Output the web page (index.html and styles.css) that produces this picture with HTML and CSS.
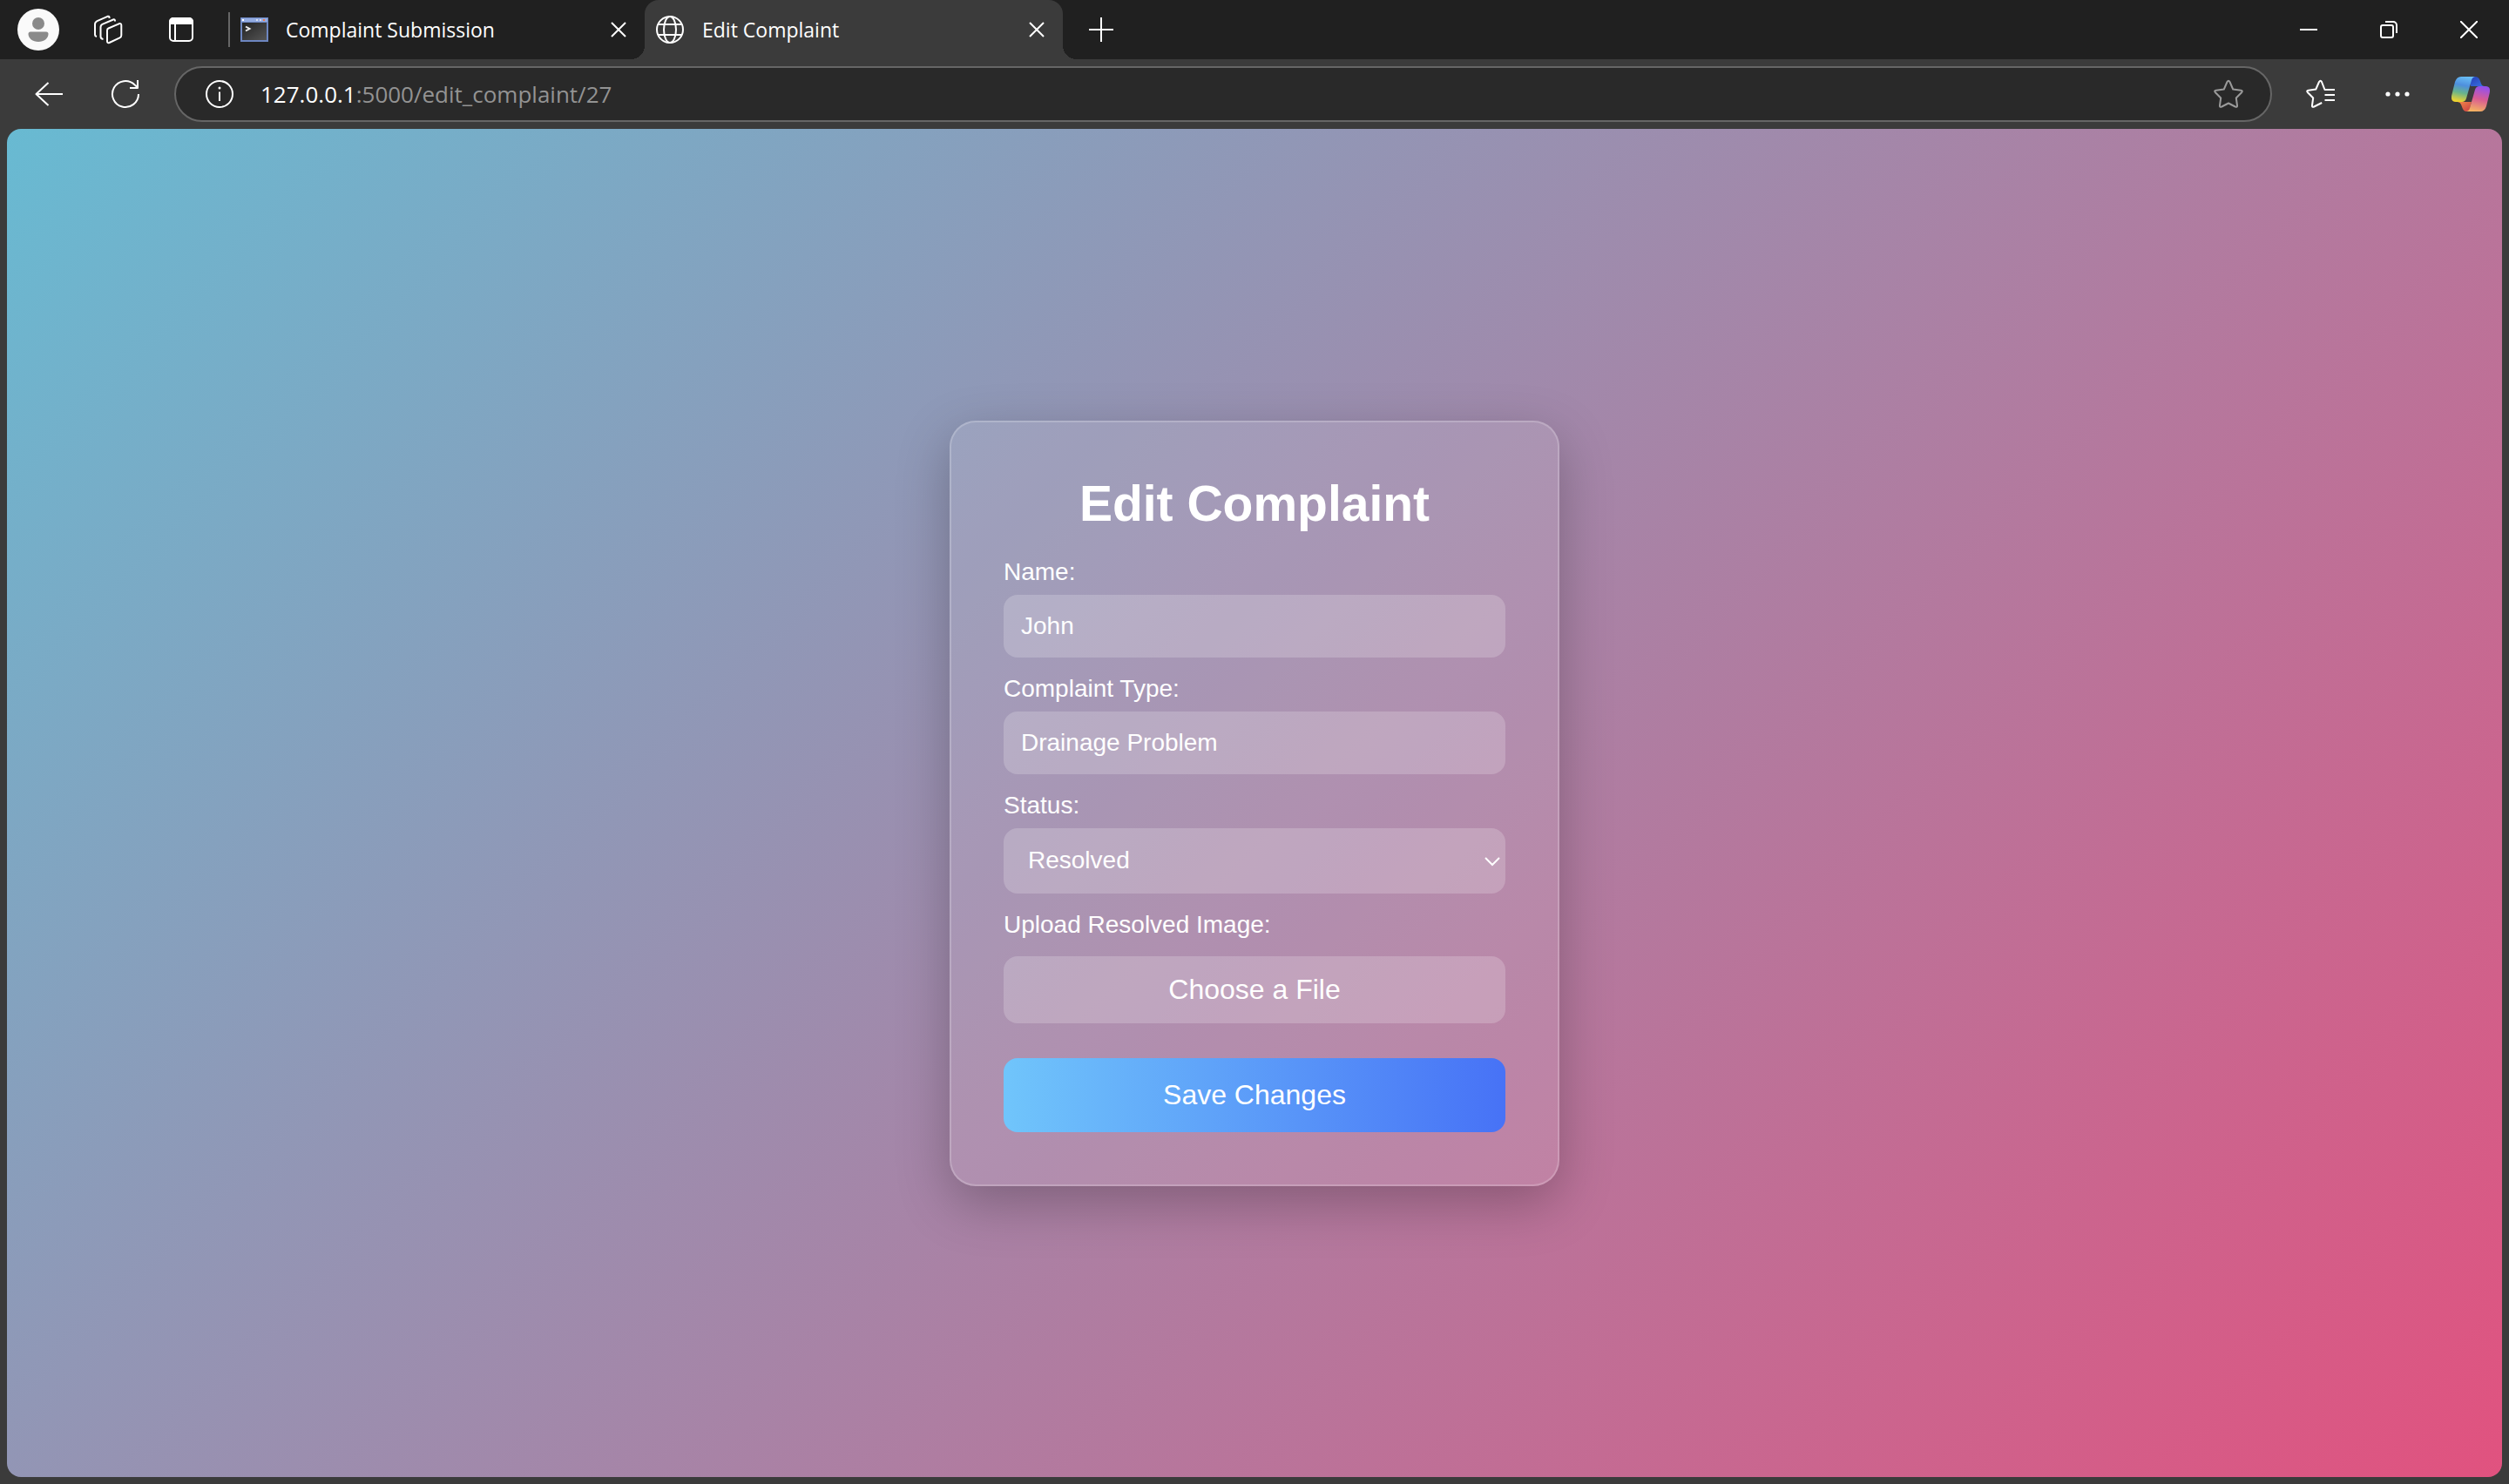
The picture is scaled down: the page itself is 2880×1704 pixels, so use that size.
FILE: index.html
```html
<!DOCTYPE html>
<html lang="en">
<head>
<meta charset="utf-8">
<meta name="viewport" content="width=device-width, initial-scale=1">
<title>Edit Complaint</title>
<link rel="stylesheet" href="styles.css">
</head>
<body>
<header class="browser">
  <div class="tabstrip">
    <button class="icon-btn profile" type="button" aria-label="Profile">
      <svg width="48" height="48" viewBox="0 0 48 48"><circle cx="24" cy="24" r="24" fill="#fafafa"/><circle cx="24" cy="17" r="7" fill="#8a8a8a"/><path d="M15 26.500h18a2.500 2.500 0 0 1 2.500 2.500c0 5-5 9-11.500 9s-11.500-4-11.500-9a2.500 2.500 0 0 1 2.500-2.500z" fill="#8a8a8a"/></svg>
    </button>
    <button class="icon-btn workspaces" type="button" aria-label="Workspaces">
      <svg class="line" width="34" height="34" viewBox="0 0 34 34"><path d="M17.500 15.500 29.500 10.300q2.800-1 2.800 1.800v11.500q0 2-1.800 2.800l-12 5.600q-2.500 1-2.500-1.800V18q0-1.800 1.500-2.500z"/><path d="M25 7.500V7q0-2.200-2-1.500l-12 5.200q-2.500 1.200-2.500 3.500V25q0 2.500 3 3"/><path d="M18.500 4V3q0-1.800-2-1.200L4.500 7.200Q2 8.500 2 11v12q0 1.500 2 2"/></svg>
    </button>
    <button class="icon-btn tab-actions" type="button" aria-label="Tab actions">
      <svg width="28" height="28" viewBox="0 0 28 28"><rect x="1" y="1" width="26" height="26" rx="4" fill="none" stroke="#fff" stroke-width="2"/><path d="M0 8V5a5 5 0 0 1 5-5h18a5 5 0 0 1 5 5v3z" fill="#fff"/><path d="M7 8v19" stroke="#fff" stroke-width="2"/></svg>
    </button>
    <span class="divider"></span>
    <nav class="tabs" aria-label="Tabs">
      <div class="tab">
        <svg class="favicon" width="32" height="28" viewBox="0 0 32 28"><defs><linearGradient id="console" x2="1" y2="1"><stop stop-color="#222"/><stop offset="1" stop-color="#555"/></linearGradient></defs><path fill="#6d86c0" d="M0 0h32v28H0z"/><path fill="#93abe0" d="M1 1h30v4H1z"/><path fill="#fff" d="M2 2h2v2H2z"/><path fill="#d5dcf0" d="M18 2h2v2h-2zM22 2h2v2h-2z"/><path fill="#ee7648" d="M26 2h2v2h-2z"/><path fill="url(#console)" d="M2 6h28v20H2z"/><path d="m6 10.500 4.500 2.500L6 15.500" fill="none" stroke="#eee" stroke-width="2"/></svg>
        <a class="tab-title" href="#">Complaint Submission</a>
        <button class="tab-close" type="button" aria-label="Close tab"><svg class="line" width="20" height="20" viewBox="0 0 20 20"><path d="m2 2 16 16M18 2 2 18"/></svg></button>
      </div>
      <div class="tab active">
        <svg class="favicon line" width="34" height="34" viewBox="0 0 34 34"><circle cx="17" cy="17" r="15"/><ellipse cx="17" cy="17" rx="7" ry="15"/><path d="M3.500 11h27M3.500 23h27"/></svg>
        <a class="tab-title" href="#" aria-current="page">Edit Complaint</a>
        <button class="tab-close" type="button" aria-label="Close tab"><svg class="line" width="20" height="20" viewBox="0 0 20 20"><path d="m2 2 16 16M18 2 2 18"/></svg></button>
      </div>
      <button class="icon-btn" type="button" aria-label="New tab"><svg class="line" width="28" height="28" viewBox="0 0 28 28"><path d="M14 0v28M0 14h28"/></svg></button>
    </nav>
    <div class="window-controls">
      <button class="window-btn" type="button" aria-label="Minimize"><svg class="line" width="20" height="20" viewBox="0 0 20 20"><path d="M0 10h20"/></svg></button>
      <button class="window-btn" type="button" aria-label="Restore"><svg class="line" width="20" height="20" viewBox="0 0 20 20"><rect x="1" y="5" width="14" height="14" rx="2"/><path d="M6 1h9a4 4 0 0 1 4 4v9"/></svg></button>
      <button class="window-btn" type="button" aria-label="Close"><svg class="line" width="20" height="20" viewBox="0 0 20 20"><path d="m0 0 20 20M20 0 0 20"/></svg></button>
    </div>
  </div>
  <div class="toolbar">
    <button class="icon-btn" type="button" aria-label="Back"><svg class="line" width="32" height="28" viewBox="0 0 32 28"><path d="M15.500 1 1.500 14l14 13M2 14h30"/></svg></button>
    <button class="icon-btn" type="button" aria-label="Refresh"><svg class="line" width="34" height="34" viewBox="0 0 34 34"><path d="M32 17a15 15 0 1 1-4.500-10.700L31 9.500M31 1v9h-9"/></svg></button>
    <div class="address">
      <svg class="line" width="34" height="34" viewBox="0 0 34 34"><circle cx="17" cy="17" r="15"/><path d="M17 14.500V25"/><circle cx="17" cy="10" r="1.500" fill="#fff" stroke="none"/></svg>
      <div class="url" role="textbox" contenteditable="true" spellcheck="false" aria-label="Address"><span class="host">127.0.0.1</span>:5000/edit_complaint/27</div>
      <button class="icon-btn favorite" type="button" aria-label="Add to favorites"><svg class="line dim" width="34" height="34" viewBox="0 0 34 34"><path d="M15.500 3q1.500-2.700 3 0l3.700 8.500 9 1.200q2.700.5.800 2.500l-6.200 6.300 1.200 8.500q.3 2.700-2.200 1.500L17 27.500l-7.800 4q-2.500 1.200-2.200-1.500l1.200-8.500L2 15.200q-1.900-2 .8-2.500l9-1.200z"/></svg></button>
    </div>
    <button class="icon-btn" type="button" aria-label="Favorites"><svg class="line" width="34" height="34" viewBox="0 0 34 34"><path d="M22 12h-.5L18 3q-1.300-2.700-3 0l-3.700 8.500-8.500 1.200q-2.700.5-.8 2.500l6.200 6.300L7 30q-.3 2.700 2.200 1.500l9-4.500M21.500 12H33M21.500 18H33M21.500 24H33"/></svg></button>
    <button class="icon-btn" type="button" aria-label="Settings and more"><svg width="28" height="6" viewBox="0 0 28 6" fill="#fff"><circle cx="3" cy="3" r="2.600"/><circle cx="14" cy="3" r="2.600"/><circle cx="25" cy="3" r="2.600"/></svg></button>
    <button class="icon-btn copilot" type="button" aria-label="Copilot">
      <svg width="44" height="40" viewBox="0 0 44 40"><defs>
        <linearGradient id="cp-a" x1=".6" x2=".4" y2="1"><stop stop-color="#68bdf5"/><stop offset=".35" stop-color="#4e8fdd"/><stop offset=".65" stop-color="#68b48c"/><stop offset="1" stop-color="#efd32f"/></linearGradient>
        <linearGradient id="cp-b" x1=".6" x2=".4" y2="1"><stop stop-color="#9350ed"/><stop offset=".5" stop-color="#d95c93"/><stop offset="1" stop-color="#f4b261"/></linearGradient>
        <linearGradient id="cp-c" x2="1" y2="1"><stop stop-color="#253cb4"/><stop offset="1" stop-color="#3973e2"/></linearGradient>
        <linearGradient id="cp-d" x2="1" y2="1"><stop stop-color="#f18a48"/><stop offset="1" stop-color="#ca3d45"/></linearGradient></defs>
        <path fill="url(#cp-c)" d="M20 0h7q4 0 5.500 4l1.500 4q1 3 4 3H22z"/>
        <path fill="url(#cp-d)" d="M9 29h14l-3 11h-3q-3 0-4.500-4L11 32q-.8-2.500-4-3z"/>
        <path fill="url(#cp-a)" d="M11 0h16q-3 .5-4 4l-6 21q-1.200 4-5 4H5q-6.500 0-4.700-8L4 6q2-6 7-6z"/>
        <path fill="url(#cp-b)" d="M32 11h7q6.500 0 4.700 8L40 34q-2 6-7 6H17q3-.5 4-4l6-21q1.200-4 5-4z"/>
      </svg>
    </button>
  </div>
</header>
<main class="page">
  <form class="card" action="#" method="post">
    <h1 class="title">Edit Complaint</h1>
    <label class="label" for="name">Name:</label>
    <input class="field" id="name" type="text" value="John">
    <label class="label" for="type">Complaint Type:</label>
    <input class="field" id="type" type="text" value="Drainage Problem">
    <label class="label" for="status">Status:</label>
    <div class="select-wrap">
      <select class="field select" id="status"><option>Pending</option><option selected>Resolved</option></select>
      <svg class="chevron" width="18" height="12" viewBox="0 0 18 12"><path d="m1 2 8 8 8-8"/></svg>
    </div>
    <label class="label upload-label" for="image">Upload Resolved Image:</label>
    <label class="upload" for="image">Choose a File</label>
    <input class="file" id="image" type="file">
    <button class="save" type="submit">Save Changes</button>
  </form>
</main>
</body>
</html>
```
FILE: styles.css
```css
* {
  box-sizing: border-box;
}

body {
  margin: 0;
  min-height: 100vh;
  display: flex;
  flex-direction: column;
  background: #3b3b3b;
  color: #fff;
  font-family: "Liberation Sans", Arial, sans-serif;
}

button {
  border: 0;
  padding: 0;
  background: none;
  color: inherit;
  font-family: inherit;
}

svg {
  display: block;
  flex: none;
}

.line {
  fill: none;
  stroke: #fff;
  stroke-width: 2;
  stroke-linejoin: round;
}

.dim {
  stroke: #9a9a9a;
}

/* Browser chrome */
.browser {
  font-family: "Open Sans", "Noto Sans", sans-serif;
}

.tabstrip {
  display: flex;
  align-items: center;
  height: 68px;
  background: #202020;
}

.icon-btn {
  display: flex;
  flex: none;
  align-items: center;
  justify-content: center;
  width: 88px;
  height: 64px;
}

.workspaces {
  width: 72px;
}

.tab-actions {
  width: 96px;
}

.divider {
  width: 2px;
  height: 40px;
  margin-left: 6px;
  background: #666;
}

.tabs {
  display: flex;
  flex: 1;
  align-items: center;
  min-width: 0;
}

.tab {
  position: relative;
  display: flex;
  flex: 0 1 476px;
  align-items: center;
  gap: 20px;
  min-width: 0;
  height: 68px;
  padding: 0 10px 0 12px;
}

.active {
  flex-basis: 480px;
  border-radius: 16px 16px 0 0;
  background: #3b3b3b;
}

.active::before,
.active::after {
  content: "";
  position: absolute;
  bottom: 0;
  width: 16px;
  height: 16px;
}

.active::before {
  right: 100%;
  background: radial-gradient(circle at 0 0, #202020 16px, #3b3b3b 16px);
}

.active::after {
  left: 100%;
  background: radial-gradient(circle at 100% 0, #202020 16px, #3b3b3b 16px);
}

.tab-title {
  flex: 1;
  overflow: hidden;
  color: #fff;
  font-size: 23px;
  line-height: 32px;
  text-decoration: none;
  white-space: nowrap;
}

.tab-close {
  display: flex;
  align-items: center;
  justify-content: center;
  width: 40px;
  height: 40px;
}

.window-controls {
  display: flex;
}

.window-btn {
  display: flex;
  align-items: center;
  justify-content: center;
  width: 92px;
  height: 68px;
}

.toolbar {
  display: flex;
  align-items: center;
  height: 80px;
  padding: 0 4px 0 12px;
}

.address {
  display: flex;
  flex: 1;
  align-items: center;
  gap: 30px;
  min-width: 0;
  height: 64px;
  margin: 0 12px;
  padding: 0 4px 0 33px;
  border: 2px solid #666;
  border-radius: 32px;
  background: #292929;
}

.url {
  flex: 1;
  overflow: hidden;
  color: #939393;
  font-size: 26px;
  line-height: 40px;
  white-space: nowrap;
}

.host {
  color: #fff;
}

.copilot {
  width: 80px;
}

/* Page */
.page {
  display: flex;
  flex: 1;
  align-items: center;
  justify-content: center;
  margin: 0 8px 8px;
  padding: 40px;
  border-radius: 16px;
  background: linear-gradient(135deg, #68bad2, #e1527f);
}

.card {
  display: flex;
  flex-direction: column;
  width: 100%;
  max-width: 700px;
  padding: 60px;
  border: 2px solid rgba(255, 255, 255, 0.2);
  border-radius: 30px;
  background: rgba(255, 255, 255, 0.1);
  box-shadow: 0 20px 60px rgba(0, 0, 0, 0.25);
}

.title {
  margin: 0 0 30px;
  font-size: 57px;
  line-height: 66px;
  text-align: center;
}

.label {
  margin-bottom: 10px;
  font-size: 28px;
  line-height: 32px;
}

.field {
  width: 100%;
  height: 72px;
  margin: 0 0 20px;
  padding: 0 20px;
  border: 0;
  border-radius: 16px;
  background: rgba(255, 255, 255, 0.2);
  color: #fff;
  font-family: inherit;
  font-size: 28px;
  line-height: 32px;
}

.select-wrap {
  position: relative;
}

.select {
  display: block;
  height: 75px;
  padding: 0 28px;
  appearance: none;
}

.select option {
  color: #222;
}

.chevron {
  position: absolute;
  top: 32px;
  right: 6px;
  fill: none;
  stroke: #fff;
  stroke-width: 2;
  pointer-events: none;
}

.upload-label {
  margin-bottom: 20px;
}

.upload {
  padding: 20px;
  border-radius: 16px;
  background: rgba(255, 255, 255, 0.2);
  font-size: 32px;
  line-height: 37px;
  text-align: center;
}

.file {
  display: none;
}

.save {
  margin-top: 40px;
  padding: 24px;
  border-radius: 16px;
  background: linear-gradient(to right, #70c5fb, #4772f6);
  font-size: 32px;
  line-height: 37px;
}
```
